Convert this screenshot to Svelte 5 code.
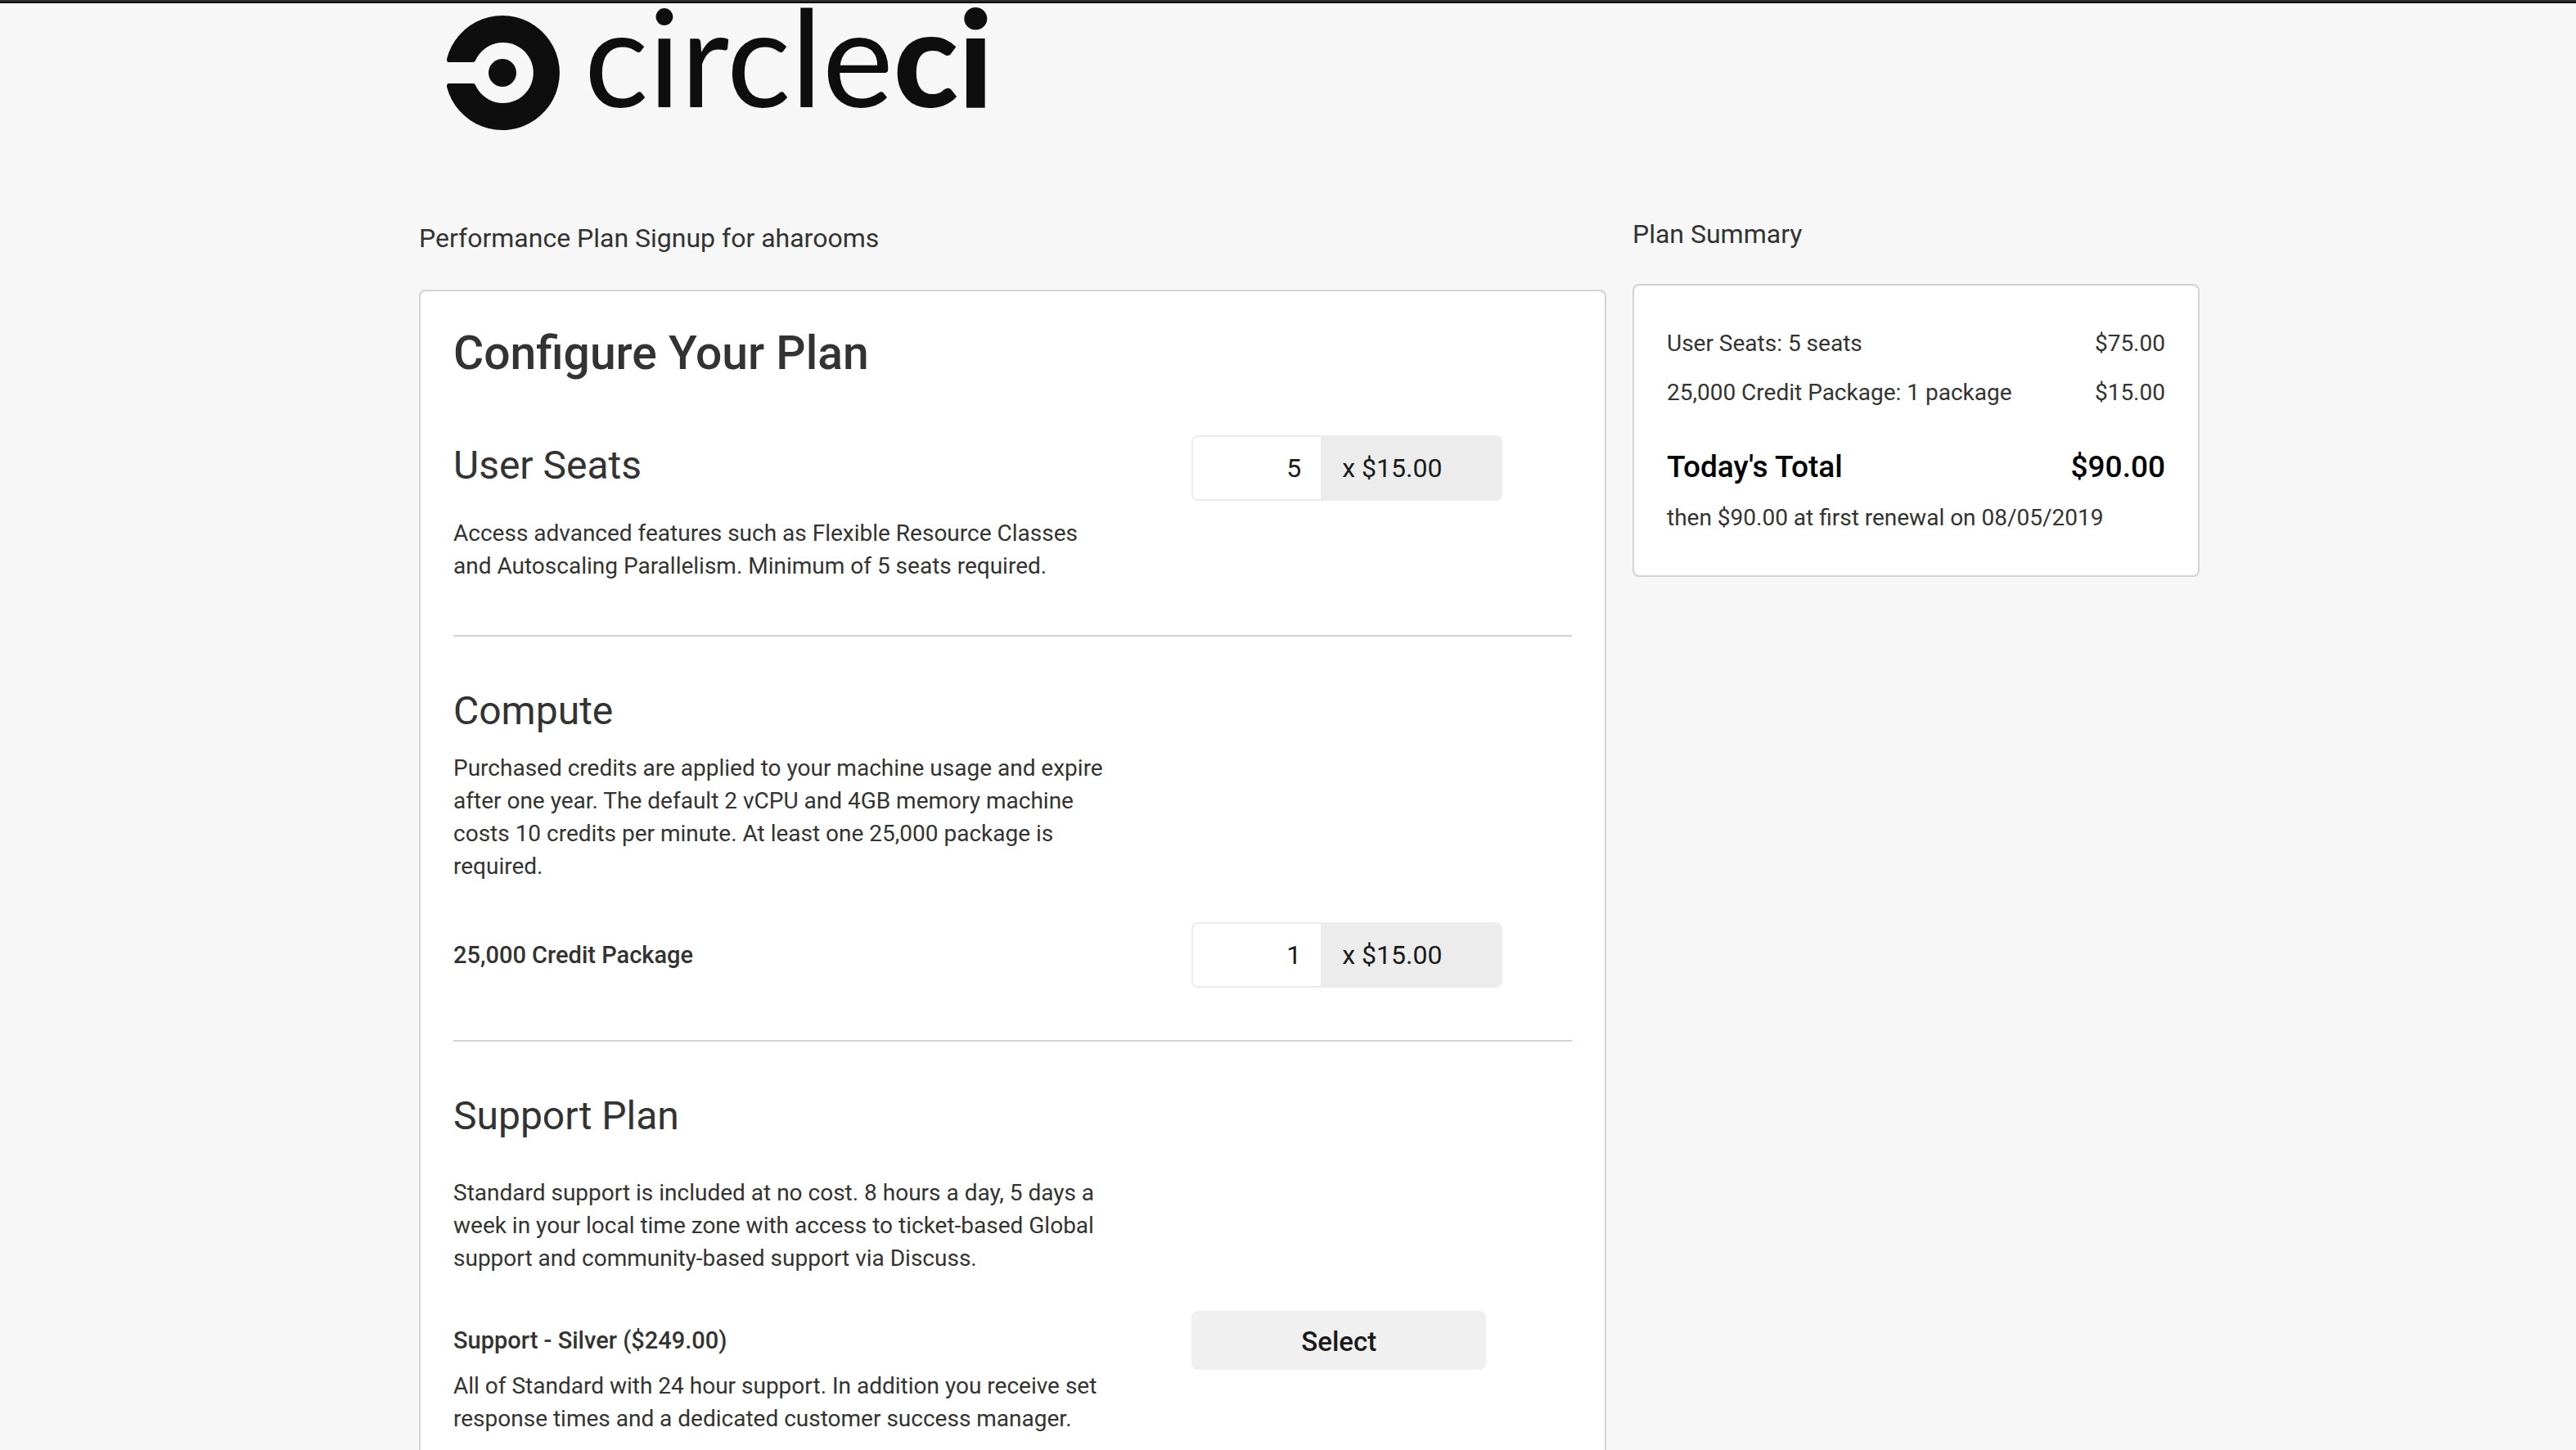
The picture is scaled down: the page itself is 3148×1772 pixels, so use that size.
<script lang="ts">
	interface SummaryLine {
		label: string;
		amount: number;
	}

	const seatPrice = 15;
	const packagePrice = 15;
	const org = 'aharooms';
	const renewalDate = '08/05/2019';

	let seats = $state(5);
	let packages = $state(1);
	let silver = $state(false);

	const lines: SummaryLine[] = $derived([
		{ label: `User Seats: ${seats} seats`, amount: seats * seatPrice },
		{
			label: `25,000 Credit Package: ${packages} ${packages === 1 ? 'package' : 'packages'}`,
			amount: packages * packagePrice
		},
		...(silver ? [{ label: 'Support - Silver', amount: 249 }] : [])
	]);
	const total = $derived(lines.reduce((sum, line) => sum + line.amount, 0));

	function money(value: number) {
		return '$' + value.toFixed(2);
	}
</script>

<div class="page">
	<header class="brand">
		<svg class="brand-mark" viewBox="0 0 138 142" aria-hidden="true">
			<path
				d="M0 54A70 70 0 1 1 0 88Q0 84 2 84H32Q34 84 35 86A37 37 0 1 0 35 56Q34 58 32 58H2Q0 58 0 54Z"
			/>
			<circle cx="68" cy="71" r="17" />
		</svg>
		<span class="brand-name">circle<b>ci</b></span>
	</header>

	<main class="columns">
		<section>
			<p class="caption">Performance Plan Signup for {org}</p>
			<div class="card plan">
				<h1>Configure Your Plan</h1>

				<div class="row">
					<h2><label for="seats">User Seats</label></h2>
					<div class="quantity">
						<input id="seats" type="text" inputmode="numeric" bind:value={seats} />
						<span class="unit">x {money(seatPrice)}</span>
					</div>
				</div>
				<p class="seats-note">
					Access advanced features such as Flexible Resource Classes and Autoscaling Parallelism.
					Minimum of 5 seats required.
				</p>

				<hr />

				<h2>Compute</h2>
				<p class="compute-note">
					Purchased credits are applied to your machine usage and expire after one year. The default
					2 vCPU and 4GB memory machine costs 10 credits per minute. At least one 25,000 package is
					required.
				</p>
				<div class="row package">
					<h3><label for="packages">25,000 Credit Package</label></h3>
					<div class="quantity">
						<input id="packages" type="text" inputmode="numeric" bind:value={packages} />
						<span class="unit">x {money(packagePrice)}</span>
					</div>
				</div>

				<hr />

				<h2>Support Plan</h2>
				<p class="support-note">
					Standard support is included at no cost. 8 hours a day, 5 days a week in your local time
					zone with access to ticket-based Global support and community-based support via Discuss.
				</p>
				<div class="row silver">
					<h3>Support - Silver ($249.00)</h3>
					<button class="select" onclick={() => (silver = !silver)}>
						{silver ? 'Remove' : 'Select'}
					</button>
				</div>
				<p>
					All of Standard with 24 hour support. In addition you receive set response times and a
					dedicated customer success manager.
				</p>
			</div>
		</section>

		<aside>
			<p class="caption">Plan Summary</p>
			<div class="card summary">
				{#each lines as line}
					<div class="line">
						<span>{line.label}</span>
						<span>{money(line.amount)}</span>
					</div>
				{/each}
				<div class="line total">
					<span>Today's Total</span>
					<span>{money(total)}</span>
				</div>
				<p>then {money(total)} at first renewal on {renewalDate}</p>
			</div>
		</aside>
	</main>
</div>

<style>
	:global(body) {
		background: #f7f7f7;
		overflow: hidden;
	}

	.page {
		border-top: 2px solid #303031;
		box-shadow: inset 0 2px #0c0c0d;
		padding: 2px 460px 0 512px;
		font-family: Roboto, 'Liberation Sans', sans-serif;
		font-size: 28px;
		line-height: 40px;
		color: #333;
	}

	h1,
	h2,
	h3,
	p {
		margin: 0;
	}

	.brand {
		display: flex;
		align-items: flex-start;
		gap: 30px;
		padding: 14px 0 106px 34px;
		color: #0e0e0e;
	}

	.brand-mark {
		width: 138px;
		height: 142px;
		fill: currentColor;
	}

	.brand-name {
		font-family: Lato, sans-serif;
		font-size: 164px;
		line-height: 100px;
	}

	.brand-name b {
		font-weight: 900;
	}

	.columns {
		display: grid;
		grid-template-columns: minmax(0, 67fr) minmax(0, 32fr);
		gap: 32px;
		align-items: start;
	}

	.caption {
		padding: 5px 0 43px;
		font-size: 32px;
	}

	aside .caption {
		padding: 0 0 41px;
	}

	.card {
		background: #fff;
		border: 2px solid #d3d3d3;
		border-radius: 8px;
	}

	.plan {
		padding: 44px 40px;
	}

	.plan p {
		max-width: 800px;
	}

	h1 {
		margin-bottom: 68px;
		font-size: 57px;
		line-height: 64px;
		font-weight: 500;
	}

	h2 {
		padding-bottom: 6px;
		font-size: 48px;
		line-height: 56px;
		font-weight: 400;
	}

	h3 {
		font-size: 29px;
		font-weight: 500;
	}

	.row {
		display: grid;
		grid-template-columns: 66% 1fr;
		align-items: center;
		justify-items: start;
	}

	.quantity {
		display: flex;
		box-sizing: border-box;
		width: 380px;
		height: 80px;
		border: 2px solid #ececec;
		border-radius: 8px;
		overflow: hidden;
		font-size: 32px;
		color: #1a1a1a;
	}

	.quantity input {
		box-sizing: border-box;
		width: 156px;
		padding: 0 24px;
		border: none;
		background: #fff;
		font: inherit;
		color: inherit;
		text-align: right;
	}

	.unit {
		flex: 1;
		padding: 18px 26px;
		background: #ececec;
	}

	.seats-note {
		margin-top: 20px;
	}

	.compute-note {
		margin-top: 16px;
	}

	.package {
		margin-top: 48px;
	}

	.support-note {
		margin-top: 40px;
	}

	.silver {
		margin-top: 44px;
	}

	hr {
		height: 2px;
		margin: 64px 0 63px;
		border: none;
		background: #d3d3d3;
	}

	.select {
		width: 360px;
		height: 72px;
		padding: 4px 0 0;
		border: none;
		border-radius: 8px;
		background: #f0f0f0;
		font: inherit;
		font-size: 33px;
		font-weight: 500;
		color: #1a1a1a;
		cursor: pointer;
	}

	.summary {
		padding: 51px 40px 50px;
	}

	.line {
		display: flex;
		justify-content: space-between;
		margin-bottom: 20px;
	}

	.total {
		margin: 51px 0 22px;
		font-size: 37px;
		font-weight: 500;
		color: #000;
	}
</style>
